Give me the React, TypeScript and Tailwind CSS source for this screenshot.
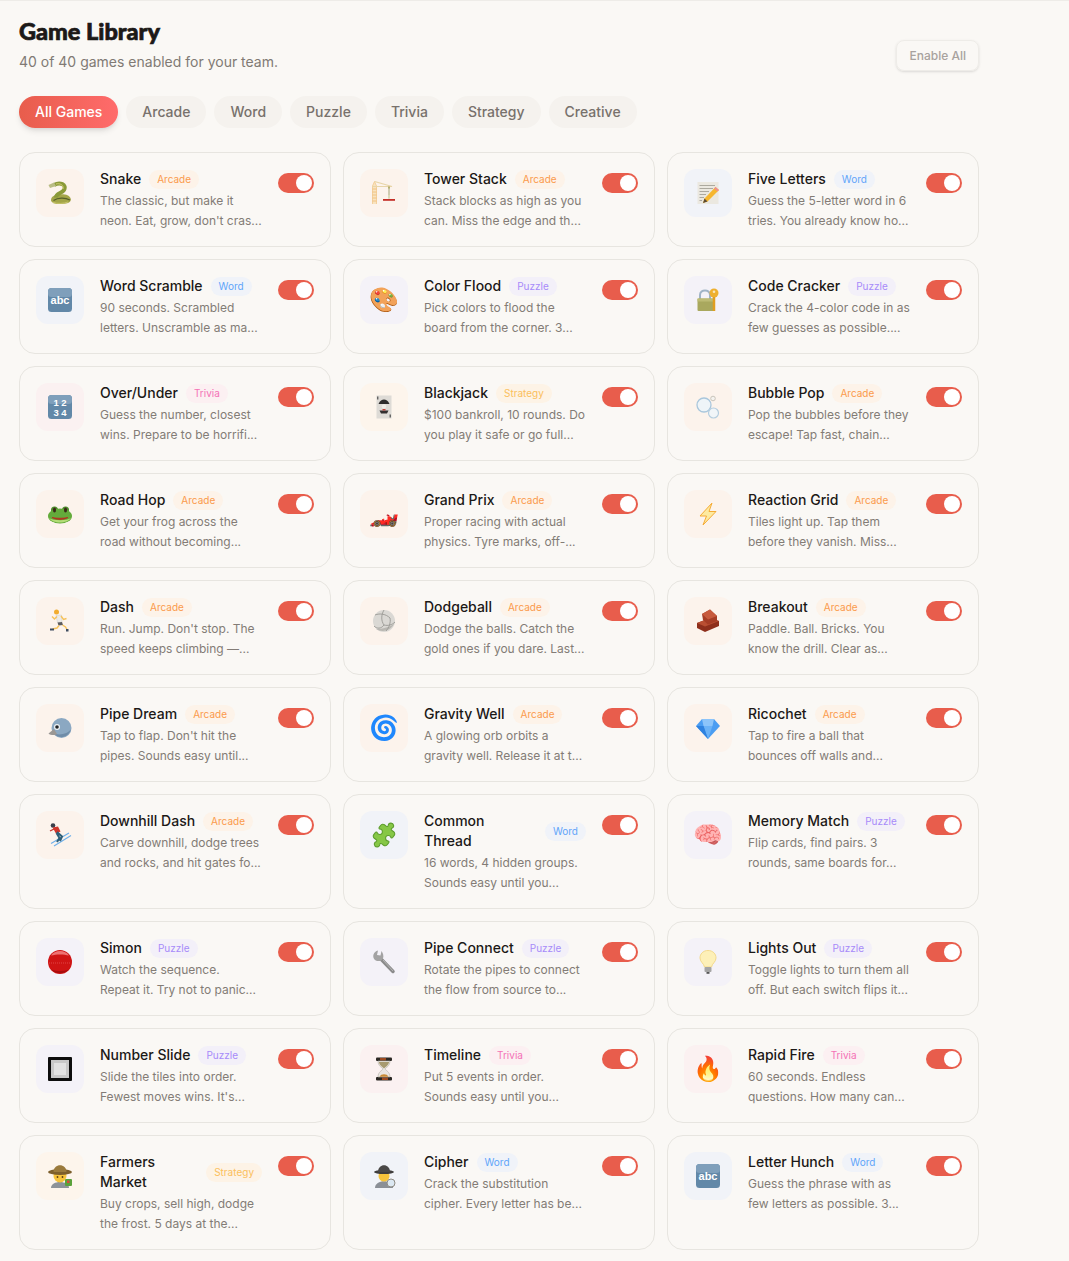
import React from 'react';
import { Puzzle } from 'lucide-react';

type Category = 'Arcade' | 'Word' | 'Puzzle' | 'Trivia' | 'Strategy';

interface Game {
  name: string;
  category: Category;
  icon: React.ReactNode;
  desc: string;
}

const categoryStyles: Record<Category, { badge: string; tile: string }> = {
  Arcade: { badge: 'bg-[#fdf3e9] text-[#fb9a4b]', tile: 'bg-[#fcf3ec]' },
  Word: { badge: 'bg-[#f0f3f9] text-[#60a5fa]', tile: 'bg-[#f1f3f8]' },
  Puzzle: { badge: 'bg-[#f3f0f9] text-[#a78bfa]', tile: 'bg-[#f4f2f8]' },
  Trivia: { badge: 'bg-[#fcf0f2] text-[#f472b6]', tile: 'bg-[#fbf1f1]' },
  Strategy: { badge: 'bg-[#fdf3e6] text-[#fbbf5d]', tile: 'bg-[#fdf5ec]' },
};

const Svg: React.FC<{ children: React.ReactNode }> = ({ children }) => (
  <svg viewBox="0 0 24 24" className="h-6 w-6">
    {children}
  </svg>
);

const SnakeIcon = () => (
  <Svg>
    <path d="M3 19C3 14 10 12.5 17 13.5C23 14.5 25 20 20 22C13 24 3 23.5 3 19Z" fill="#a3a548" />
    <path d="M5.5 19.5C10 16.5 17 16.5 22 19" stroke="#55602a" strokeWidth="1.3" fill="none" />
    <path d="M5 21.5C10 23 16 22.5 20 21" stroke="#c9c66c" strokeWidth="1" fill="none" />
    <path d="M6 4C12 0.5 19 3.5 16 9C14 12.5 8 12 8 16.5" stroke="#8a9a38" strokeWidth="4" fill="none" />
    <path d="M8 3C12 2 16 4 15 8" stroke="#d0cc72" strokeWidth="1" fill="none" />
    <path d="M0.5 4L6 1.5L8 5L2 7Z" fill="#b9bc84" />
  </Svg>
);

const CraneIcon = () => (
  <Svg>
    <path d="M0.5 23V5L2.5 0.5L4.5 5V23" fill="#f8e3c0" stroke="#f2c88c" strokeWidth="0.8" />
    <path d="M0.5 8H4.5M0.5 11H4.5M0.5 14H4.5M0.5 17H4.5M0.5 20H4.5" stroke="#f0bf7e" strokeWidth="0.9" />
    <path d="M2.5 0.5L20 5.5H0.5" fill="none" stroke="#e8d5a8" strokeWidth="1.2" />
    <path d="M17 6V17.5" stroke="#9a9a6a" strokeWidth="0.9" />
    <rect x="16" y="5.5" width="2" height="2" fill="#b5b070" />
    <rect x="16" y="14" width="2" height="3" fill="#dbd9b8" />
    <rect x="11" y="18" width="12" height="1.8" fill="#c42f27" />
  </Svg>
);

const MemoIcon = () => (
  <Svg>
    <rect x="1.5" y="1" width="21" height="22" fill="#ebe8e0" />
    <path d="M3.5 4.5H19M3.5 7.5H17M3.5 10.5H13M3.5 13.5H10M3.5 16.5H8M3.5 19.5H6" stroke="#a5a197" strokeWidth="0.9" />
    <path d="M19.5 6L23 9L11.5 20.5L7 22L8.5 17.5Z" fill="#f6b62f" />
    <path d="M19.5 6L23 9L21.5 10.5L18 7.5Z" fill="#ef8f8f" />
    <path d="M8.5 17.5L11.5 20.5L7 22Z" fill="#5b4a32" />
  </Svg>
);

const LabelTile: React.FC<{ children: React.ReactNode }> = ({ children }) => (
  <Svg>
    <rect x="0" y="0" width="24" height="24" rx="3.5" fill="#6288a8" />
    <rect x="0" y="0" width="24" height="9" rx="3.5" fill="#7f9fbb" />
    {children}
  </Svg>
);

const AbcIcon = () => (
  <LabelTile>
    <text x="12" y="16" textAnchor="middle" fontSize="11" fontWeight="700" fill="#ffffff" fontFamily="'Liberation Sans', sans-serif">
      abc
    </text>
  </LabelTile>
);

const NumbersIcon = () => (
  <LabelTile>
    <text x="12" y="10.5" textAnchor="middle" fontSize="9.5" fontWeight="700" fill="#ffffff" fontFamily="'Liberation Sans', sans-serif">
      1 2
    </text>
    <text x="12" y="20.5" textAnchor="middle" fontSize="9.5" fontWeight="700" fill="#ffffff" fontFamily="'Liberation Sans', sans-serif">
      3 4
    </text>
  </LabelTile>
);

const JokerIcon = () => (
  <Svg>
    <rect x="4.5" y="0.5" width="15" height="23" fill="#dedbd6" />
    <path d="M6.5 9C8 5.5 10 4.5 12 4.5C14 4.5 16 5.5 17.5 9Z" fill="#2e2c2c" />
    <circle cx="12" cy="11.5" r="2.2" fill="#f0ece6" />
    <path d="M7.5 15.5H16.5L15 18.5H9Z" fill="#333030" />
    <rect x="10.5" y="14" width="3" height="1.5" fill="#c2413a" />
    <path d="M5.8 1.5V4.5M18.2 19.5V22.5" stroke="#333" strokeWidth="1" />
  </Svg>
);

const BubblesIcon = () => (
  <Svg>
    <circle cx="8" cy="10" r="7" fill="#eef4f8" stroke="#a9c6dc" strokeWidth="1.3" />
    <circle cx="17.5" cy="18" r="5" fill="#f1f5f8" stroke="#b5cddf" strokeWidth="1.2" />
    <circle cx="17" cy="3.5" r="2.3" fill="#f5f3ef" stroke="#c9c5bc" strokeWidth="1" />
  </Svg>
);

const FrogIcon = () => (
  <Svg>
    <circle cx="6.5" cy="8" r="3.5" fill="#4d8a2b" />
    <circle cx="17.5" cy="8" r="3.5" fill="#4d8a2b" />
    <ellipse cx="12" cy="14" rx="12" ry="7.5" fill="#63ab3b" />
    <path d="M1 16C5 22 19 22 23 16C19 19 5 19 1 16Z" fill="#b4dd78" />
    <ellipse cx="6.5" cy="8" rx="1.5" ry="2.5" fill="#3a2817" />
    <ellipse cx="17.5" cy="8" rx="1.5" ry="2.5" fill="#3a2817" />
    <path d="M4 15.5C8 18 16 18 20 15.5C16 16.5 8 16.5 4 15.5Z" fill="#b5301f" stroke="#b5301f" strokeWidth="0.8" />
  </Svg>
);

const BoltIcon = () => (
  <Svg>
    <path d="M16 1L4 14H10.5L7 23L20 9.5H13Z" fill="#fdeaa0" stroke="#f5ab35" strokeWidth="1" strokeLinejoin="round" />
  </Svg>
);

const RunnerIcon = () => (
  <Svg>
    <circle cx="8.5" cy="3" r="2.5" fill="#f2ac2e" />
    <path d="M8 6.5L13.5 6L14 13L9.5 13.5Z" fill="#ecebe8" stroke="#cfcdc8" strokeWidth="0.5" />
    <path d="M9 7.5L6.5 10L4 7.5M13 7L15.5 10.5L18.5 9.5" stroke="#f6c25b" strokeWidth="1.4" fill="none" />
    <path d="M9.5 13.5L14 13L15 16L10.5 16.5Z" fill="#5c5c5f" />
    <path d="M11 16.5L9 19L4.5 20M14.5 16L17.5 18L19 20.5" stroke="#f6c25b" strokeWidth="1.4" fill="none" />
    <path d="M2 19.5H6V21.5H2ZM18 20H20.5V22.5H18Z" fill="#3f4d60" />
  </Svg>
);

const BricksIcon = () => (
  <Svg>
    <path d="M1 14L14 9L23 12V17L9 23L1 19Z" fill="#8e2f1c" />
    <path d="M1 14L9 17.5L23 12L14 9Z" fill="#b94f33" />
    <path d="M6 5L14 0.5L21 7V12L12 15.5L7 11Z" fill="#a63d26" />
    <path d="M6 5L14 0.5L21 7L12 10.5Z" fill="#c75a3d" />
  </Svg>
);

const BirdIcon = () => (
  <Svg>
    <circle cx="13.5" cy="12" r="10" fill="#8ba8c2" />
    <path d="M5 17C10 23 20 23 23 13C20 18 11 20 5 17Z" fill="#6f8ca8" />
    <path d="M6 13L0.5 17.5C2 19 7 20 9 18Z" fill="#9a9794" />
    <circle cx="9" cy="11" r="3" fill="#eef2f5" />
    <circle cx="9" cy="11" r="1.8" fill="#1f2328" />
  </Svg>
);

const GemIcon = () => (
  <Svg>
    <path d="M6 3H18L24 10L12 23L0 10Z" fill="#4b9df2" />
    <path d="M6 3H18L16.5 10H7.5Z" fill="#8cc4fa" />
    <path d="M7.5 10H16.5L12 23Z" fill="#6bb2f7" />
    <path d="M0 10H7.5L12 23Z" fill="#2f82e0" />
  </Svg>
);

const SkierIcon = () => (
  <Svg>
    <path d="M3 20.5L21 10M6 23L23 12.5" stroke="#6fb0ea" strokeWidth="1.2" />
    <circle cx="5" cy="2.5" r="2.3" fill="#3a3f4a" />
    <path d="M4.5 4.5L10 3.5L12.5 8.5L8 10.5Z" fill="#d0352b" />
    <path d="M6 6L2 8" stroke="#c9352b" strokeWidth="1.3" />
    <path d="M9 9L14 13.5L12 18M8.5 10L11.5 15L9 19" stroke="#2f5f78" strokeWidth="2" fill="none" />
  </Svg>
);

const LockIcon = () => (
  <Svg>
    <path d="M4 11V7C4 1 14 1 14 7V11" fill="none" stroke="#9fb3c6" strokeWidth="2" />
    <rect x="1.5" y="10.5" width="17" height="12.5" rx="1" fill="#a9a85e" />
    <rect x="1.5" y="10.5" width="17" height="3" fill="#bdbb74" />
    <circle cx="18" cy="5" r="4.5" fill="#eeb02f" />
    <circle cx="18" cy="3.8" r="1.3" fill="#f7e6bb" />
    <path d="M18 9V23" stroke="#e09e20" strokeWidth="2.5" />
  </Svg>
);

const VolleyballIcon = () => (
  <Svg>
    <circle cx="12" cy="12" r="11" fill="#dad8d4" />
    <path d="M4 20C10 24 19 22 22.500 14C19 18 10 20 4 20Z" fill="#b9b7b2" />
    <path d="M3 6C8 4 14 5 18 9M12 1C9 6 9 12 12 16M12 16C16 17 20 16 23 13M12 16C9 20 5 20 2 17M18 9C19 13 17 19 14 22" stroke="#9a9894" strokeWidth="0.9" fill="none" />
  </Svg>
);

const SimonIcon = () => (
  <Svg>
    <circle cx="12" cy="12" r="12" fill="#cf1414" />
    <path d="M3 5.5C6.5 -0.5 17.5 -0.5 21 5.5C16 4 8 4 3 5.5Z" fill="#ee7272" />
    <path d="M1 13H23" stroke="#e04444" strokeWidth="1" strokeDasharray="1 1" />
    <path d="M3 19.5C8 24.5 16 24.5 21 19.5C15 21.5 9 21.5 3 19.5Z" fill="#a80d0d" />
  </Svg>
);

const WrenchIcon = () => (
  <Svg>
    <path d="M8 8L21 21.5" stroke="#8b8b8b" strokeWidth="3.5" strokeLinecap="round" />
    <path d="M11 10L21 21" stroke="#b5b5b5" strokeWidth="1" />
    <path d="M6 0.5C1.5 1.5 0 6.5 2.5 9.5C5 12 9.5 11.5 11 8.5C12 6 11 3 9.5 1L8.5 5.5L5 5Z" fill="#a3a3a3" />
  </Svg>
);

const BulbIcon = () => (
  <Svg>
    <path d="M12 0.5C7 0.5 4 4 4 8C4 12 8 13.5 8.5 17H15.5C16 13.5 20 12 20 8C20 4 17 0.5 12 0.5Z" fill="#fdf0b8" stroke="#f3d98b" strokeWidth="1" />
    <rect x="8.5" y="17" width="7" height="5" rx="1" fill="#a5a5a5" />
    <rect x="10.5" y="22" width="3" height="1.8" fill="#555" />
  </Svg>
);

const FrameIcon = () => (
  <Svg>
    <rect x="0" y="0" width="24" height="24" rx="1" fill="#0d0d0d" />
    <rect x="3" y="3" width="18" height="18" fill="#c9c9c9" />
    <rect x="6" y="6" width="12" height="12" fill="#e2e2e2" />
  </Svg>
);

const HourglassIcon = () => (
  <Svg>
    <rect x="4" y="0.5" width="16" height="3.5" rx="1" fill="#2b2723" />
    <rect x="8" y="1" width="6" height="2.5" fill="#9c4a20" />
    <rect x="4" y="20" width="16" height="3.5" rx="1" fill="#2b2723" />
    <rect x="10" y="20.5" width="6" height="2.5" fill="#9c4a20" />
    <path d="M6 4H18C18 9 14 10.5 13 12C14 13.5 18 15 18 20H6C6 15 10 13.5 11 12C10 10.5 6 9 6 4Z" fill="#e9e6e2" stroke="#b4aea6" strokeWidth="0.6" />
    <path d="M6.8 5H17.2C16.5 8.5 13.5 10 12 11.5C10.5 10 7.5 8.5 6.8 5Z" fill="#a89a70" />
    <path d="M7.5 19.8C9 16.5 15 16.5 16.5 19.8Z" fill="#c98a34" />
  </Svg>
);

const FarmerIcon = () => (
  <Svg>
    <path d="M3 24C3 16 21 16 21 24Z" fill="#8d9399" />
    <circle cx="12" cy="12" r="6.5" fill="#f6c33b" />
    <ellipse cx="12" cy="8" rx="12" ry="3" fill="#7d5f2c" />
    <path d="M5.5 8C5.5 -1 18.5 -1 18.500 8Z" fill="#9a7a3c" />
    <rect x="17" y="15" width="7" height="7" rx="1" fill="#5aa13b" />
    <rect x="19" y="16.5" width="2.5" height="2.5" fill="#d8483a" />
    <circle cx="9.500" cy="13" r="0.900" fill="#5b3d12" />
    <circle cx="14.500" cy="13" r="0.900" fill="#5b3d12" />
  </Svg>
);

const DetectiveIcon = () => (
  <Svg>
    <path d="M3 24C3 15 21 15 21 24Z" fill="#8b8f96" />
    <circle cx="12" cy="12" r="5.5" fill="#f6c33b" />
    <ellipse cx="12" cy="8" rx="10" ry="2" fill="#3f3d3c" />
    <path d="M6 8C6 -1 18 -1 18 8Z" fill="#4a4847" />
    <circle cx="19" cy="19" r="4" fill="#dce8f2" stroke="#8e8a82" strokeWidth="1" />
  </Svg>
);

const PuzzleIcon = () => (
  <Puzzle size={26} fill="#86c746" stroke="#5f9e30" strokeWidth={1} className="rotate-[-8deg]" />
);

const Emoji: React.FC<{ char: string }> = ({ char }) => <span className="text-2xl leading-none">{char}</span>;

const games: Game[] = [
  { name: 'Snake', category: 'Arcade', icon: <SnakeIcon />, desc: "The classic, but make it neon. Eat, grow, don't cras..." },
  { name: 'Tower Stack', category: 'Arcade', icon: <CraneIcon />, desc: 'Stack blocks as high as you can. Miss the edge and th...' },
  { name: 'Five Letters', category: 'Word', icon: <MemoIcon />, desc: 'Guess the 5-letter word in 6 tries. You already know ho...' },
  { name: 'Word Scramble', category: 'Word', icon: <AbcIcon />, desc: '90 seconds. Scrambled letters. Unscramble as ma...' },
  { name: 'Color Flood', category: 'Puzzle', icon: <Emoji char="🎨" />, desc: 'Pick colors to flood the board from the corner. 3...' },
  { name: 'Code Cracker', category: 'Puzzle', icon: <LockIcon />, desc: 'Crack the 4-color code in as few guesses as possible....' },
  { name: 'Over/Under', category: 'Trivia', icon: <NumbersIcon />, desc: 'Guess the number, closest wins. Prepare to be horrifi...' },
  { name: 'Blackjack', category: 'Strategy', icon: <JokerIcon />, desc: '$100 bankroll, 10 rounds. Do you play it safe or go full...' },
  { name: 'Bubble Pop', category: 'Arcade', icon: <BubblesIcon />, desc: 'Pop the bubbles before they escape! Tap fast, chain...' },
  { name: 'Road Hop', category: 'Arcade', icon: <FrogIcon />, desc: 'Get your frog across the road without becoming...' },
  { name: 'Grand Prix', category: 'Arcade', icon: <Emoji char="🏎️" />, desc: 'Proper racing with actual physics. Tyre marks, off-...' },
  { name: 'Reaction Grid', category: 'Arcade', icon: <BoltIcon />, desc: 'Tiles light up. Tap them before they vanish. Miss...' },
  { name: 'Dash', category: 'Arcade', icon: <RunnerIcon />, desc: "Run. Jump. Don't stop. The speed keeps climbing —..." },
  { name: 'Dodgeball', category: 'Arcade', icon: <VolleyballIcon />, desc: 'Dodge the balls. Catch the gold ones if you dare. Last...' },
  { name: 'Breakout', category: 'Arcade', icon: <BricksIcon />, desc: 'Paddle. Ball. Bricks. You know the drill. Clear as...' },
  { name: 'Pipe Dream', category: 'Arcade', icon: <BirdIcon />, desc: "Tap to flap. Don't hit the pipes. Sounds easy until..." },
  { name: 'Gravity Well', category: 'Arcade', icon: <Emoji char="🌀" />, desc: 'A glowing orb orbits a gravity well. Release it at t...' },
  { name: 'Ricochet', category: 'Arcade', icon: <GemIcon />, desc: 'Tap to fire a ball that bounces off walls and...' },
  { name: 'Downhill Dash', category: 'Arcade', icon: <SkierIcon />, desc: 'Carve downhill, dodge trees and rocks, and hit gates fo...' },
  { name: 'Common\nThread', category: 'Word', icon: <PuzzleIcon />, desc: '16 words, 4 hidden groups. Sounds easy until you...' },
  { name: 'Memory Match', category: 'Puzzle', icon: <Emoji char="🧠" />, desc: 'Flip cards, find pairs. 3 rounds, same boards for...' },
  { name: 'Simon', category: 'Puzzle', icon: <SimonIcon />, desc: 'Watch the sequence. Repeat it. Try not to panic...' },
  { name: 'Pipe Connect', category: 'Puzzle', icon: <WrenchIcon />, desc: 'Rotate the pipes to connect the flow from source to...' },
  { name: 'Lights Out', category: 'Puzzle', icon: <BulbIcon />, desc: 'Toggle lights to turn them all off. But each switch flips it...' },
  { name: 'Number Slide', category: 'Puzzle', icon: <FrameIcon />, desc: "Slide the tiles into order. Fewest moves wins. It's..." },
  { name: 'Timeline', category: 'Trivia', icon: <HourglassIcon />, desc: 'Put 5 events in order. Sounds easy until you...' },
  { name: 'Rapid Fire', category: 'Trivia', icon: <Emoji char="🔥" />, desc: '60 seconds. Endless questions. How many can...' },
  { name: 'Farmers Market', category: 'Strategy', icon: <FarmerIcon />, desc: 'Buy crops, sell high, dodge the frost. 5 days at the...' },
  { name: 'Cipher', category: 'Word', icon: <DetectiveIcon />, desc: 'Crack the substitution cipher. Every letter has be...' },
  { name: 'Letter Hunch', category: 'Word', icon: <AbcIcon />, desc: 'Guess the phrase with as few letters as possible. 3...' },
];

const filters = ['Arcade', 'Word', 'Puzzle', 'Trivia', 'Strategy', 'Creative'];

const GameCard: React.FC<{ game: Game }> = ({ game }) => {
  const styles = categoryStyles[game.category];
  // a two-line name takes all the room the badge leaves
  const nameWidth = game.name.includes('\n') ? 'flex-1' : '';
  return (
    <div className="flex items-start gap-4 rounded-2xl border border-[#e7e5e0] p-4">
      <div className={`flex h-12 w-12 shrink-0 items-center justify-center rounded-xl ${styles.tile}`}>{game.icon}</div>
      <div className="min-w-0 flex-1">
        <div className="flex items-center gap-2">
          <span className={`text-sm leading-5 font-[550] whitespace-pre-line text-[#1c1917] ${nameWidth}`}>{game.name}</span>
          <span className={`shrink-0 rounded-full px-2 text-[10px] leading-[19px] ${styles.badge}`}>{game.category}</span>
        </div>
        <p className="mt-0.5 text-xs leading-relaxed text-[#837c76]">{game.desc}</p>
      </div>
      <div className="mt-1 flex h-5 w-9 shrink-0 items-center justify-end rounded-full bg-[#e85d4c] px-0.5">
        <div className="h-4 w-4 rounded-full bg-white" />
      </div>
    </div>
  );
};

const App: React.FC = () => {
  return (
    <div className="min-h-[1261px] border-t border-[#eeece8] bg-[#faf8f5] pt-4 pl-[19px] font-['Inter',sans-serif]">
      <div className="w-[960px]">
        <div className="flex items-end justify-between">
          <div>
            <h1 className="font-['Lato',sans-serif] text-[23.5px] leading-7 font-black text-[#1c1917] [-webkit-text-stroke:0.7px_#1c1917]">
              Game Library
            </h1>
            <p className="mt-[7px] text-sm leading-5 text-[#807a74]">40 of 40 games enabled for your team.</p>
          </div>
          <button className="mb-px h-[31px] rounded-lg border border-[#eeece8] px-3 text-xs font-medium text-[#a8a29e] shadow-sm">
            Enable All
          </button>
        </div>
        <div className="mt-6 flex gap-2">
          <button className="h-8 rounded-full bg-gradient-to-r from-[#e85d4c] to-[#ff6b6b] px-4 text-sm font-[450] text-white shadow-md">
            All Games
          </button>
          {filters.map((f) => (
            <button key={f} className="h-8 rounded-full bg-[#f5f2ee] px-4 text-sm font-[450] text-[#78716c]">
              {f}
            </button>
          ))}
        </div>
        <div className="mt-6 grid grid-cols-3 gap-3 pb-3">
          {games.map((g) => (
            <GameCard key={g.name} game={g} />
          ))}
        </div>
      </div>
    </div>
  );
};

export default App;
